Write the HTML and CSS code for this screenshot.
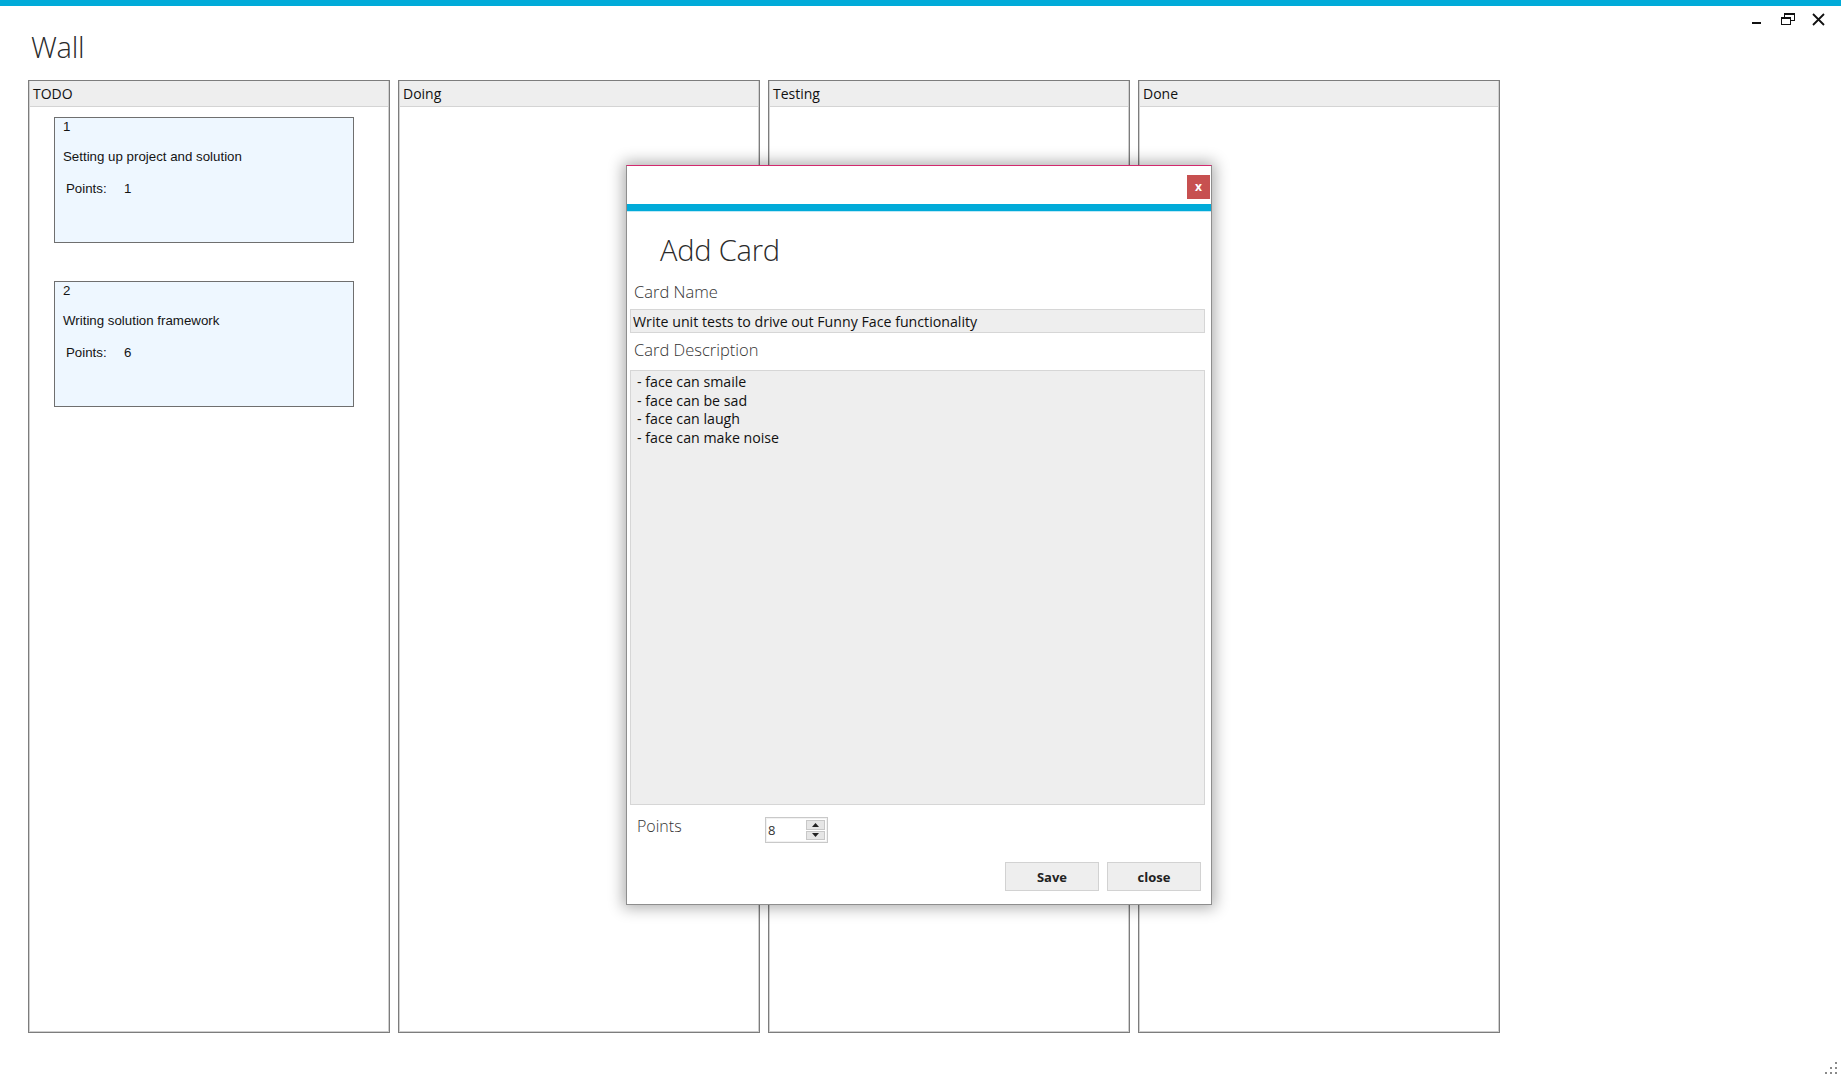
FILE: index.html
```html
<!DOCTYPE html>
<html lang="en">
<head>
<meta charset="utf-8">
<title>Wall</title>
<link rel="stylesheet" href="styles.css">
</head>
<body>
<div class="app">
  <header class="topbar">
    <h1 class="title">Wall</h1>
    <div class="winctl">
      <svg class="winctl-icons" width="80" height="20" viewBox="0 0 80 20" aria-hidden="true">
        <rect x="2" y="12" width="9" height="2" fill="#111"/>
        <rect x="34.5" y="3.5" width="10" height="7" fill="none" stroke="#111" stroke-width="1"/>
        <rect x="34" y="3" width="11" height="2" fill="#111"/>
        <rect x="31.5" y="7.5" width="9" height="7" fill="#fff" stroke="#111" stroke-width="1"/>
        <rect x="31" y="7" width="10" height="2" fill="#111"/>
        <path d="M63 4 L74 15 M74 4 L63 15" stroke="#111" stroke-width="1.8" fill="none"/>
      </svg>
    </div>
  </header>

  <main class="board">
    <section class="column">
      <div class="col-head">TODO</div>
      <div class="col-body">
        <div class="card">
          <div class="card-num">1</div>
          <div class="card-title">Setting up project and solution</div>
          <div class="card-points"><span class="pts-label">Points:</span><span class="pts-val">1</span></div>
        </div>
        <div class="card">
          <div class="card-num">2</div>
          <div class="card-title">Writing solution framework</div>
          <div class="card-points"><span class="pts-label">Points:</span><span class="pts-val">6</span></div>
        </div>
      </div>
    </section>
    <section class="column">
      <div class="col-head">Doing</div>
      <div class="col-body"></div>
    </section>
    <section class="column">
      <div class="col-head">Testing</div>
      <div class="col-body"></div>
    </section>
    <section class="column">
      <div class="col-head">Done</div>
      <div class="col-body"></div>
    </section>
  </main>

  <div class="dialog">
    <div class="dlg-titlebar">
      <button class="dlg-close" type="button">x</button>
    </div>
    <div class="dlg-accent"></div>
    <div class="dlg-body">
      <h2 class="dlg-title">Add Card</h2>
      <label class="dlg-label">Card Name</label>
      <input class="dlg-input" type="text" value="Write unit tests to drive out Funny Face functionality" readonly>
      <label class="dlg-label dlg-label-desc">Card Description</label>
      <textarea class="dlg-textarea" readonly>- face can smaile
- face can be sad
- face can laugh
- face can make noise</textarea>
      <div class="points-row">
        <span class="points-label">Points</span>
        <div class="spinner">
          <span class="spin-value">8</span>
          <div class="spin-btns">
            <span class="spin-btn"><svg width="7" height="4" viewBox="0 0 7 4"><path d="M0 4 L3.5 0 L7 4 Z" fill="#222"/></svg></span>
            <span class="spin-btn"><svg width="7" height="4" viewBox="0 0 7 4"><path d="M0 0 L3.5 4 L7 0 Z" fill="#222"/></svg></span>
          </div>
        </div>
      </div>
      <div class="dlg-actions">
        <button class="btn" type="button">Save</button>
        <button class="btn" type="button">close</button>
      </div>
    </div>
  </div>

  <div class="grip">
    <svg width="14" height="14" viewBox="0 0 14 14" aria-hidden="true">
      <rect x="11" y="1" width="2" height="2" fill="#8a8a8a"/>
      <rect x="6" y="6" width="2" height="2" fill="#8a8a8a"/>
      <rect x="11" y="6" width="2" height="2" fill="#8a8a8a"/>
      <rect x="1" y="11" width="2" height="2" fill="#8a8a8a"/>
      <rect x="6" y="11" width="2" height="2" fill="#8a8a8a"/>
      <rect x="11" y="11" width="2" height="2" fill="#8a8a8a"/>
    </svg>
  </div>
</div>
</body>
</html>
```

FILE: styles.css
```css
html, body {
  margin: 0;
  padding: 0;
  background: #ffffff;
}

body {
  width: 1841px;
  height: 1079px;
  overflow: hidden;
  font-family: "Open Sans", "Noto Sans", sans-serif;
  color: #1a1a1a;
}

.app {
  position: relative;
  width: 1841px;
  height: 1079px;
  box-sizing: border-box;
  border-top: 6px solid #01abd9;
}

/* ---------- header ---------- */
.topbar {
  height: 74px;
  display: flex;
  justify-content: space-between;
  align-items: flex-start;
}

.title {
  margin: 21px 0 0 31px;
  font-family: "Open Sans", sans-serif;
  font-weight: 300;
  font-size: 29px;
  line-height: 40px;
  letter-spacing: -0.3px;
  color: #2a2a2a;
}

.winctl {
  padding: 4px 11px 0 0;
}

.winctl-icons {
  display: block;
}

/* ---------- board ---------- */
.board {
  display: flex;
  gap: 8px;
  padding-left: 28px;
  height: 953px;
}

.column {
  width: 362px;
  height: 953px;
  box-sizing: border-box;
  border: 1px solid #7d7d7d;
  box-shadow: inset 0 0 0 1px #cfcfcf;
  display: flex;
  flex-direction: column;
  background: #fff;
}

.col-head {
  height: 26px;
  box-sizing: border-box;
  margin: 0 1px;
  padding-left: 3px;
  background: #eeeeee;
  border-bottom: 1px solid #d4d4d4;
  font-size: 14px;
  line-height: 26px;
  color: #111;
}

.col-body {
  flex: 1;
  display: flex;
  flex-direction: column;
  gap: 38px;
  padding: 10px 0 0 25px;
}

.card {
  width: 300px;
  height: 126px;
  box-sizing: border-box;
  border: 1px solid #6f6f6f;
  background: #eef7ff;
  padding: 1px 0 0 8px;
  font-family: "Liberation Sans", Arial, sans-serif;
  font-size: 13.3px;
  color: #141414;
}

.card-num {
  line-height: 16px;
}

.card-title {
  margin-top: 14px;
  line-height: 16px;
}

.card-points {
  margin-top: 16px;
  padding-left: 3px;
  line-height: 16px;
  display: flex;
}

.pts-label {
  width: 58px;
}

/* ---------- dialog ---------- */
.dialog {
  position: absolute;
  left: 626px;
  top: 159px;
  width: 586px;
  height: 740px;
  box-sizing: border-box;
  background: #fff;
  border: 1px solid #8e8e8e;
  border-top: 1px solid #d3296e;
  box-shadow: 0 0 14px 3px rgba(0, 0, 0, 0.32);
  display: flex;
  flex-direction: column;
}

.dlg-titlebar {
  height: 38px;
  box-sizing: border-box;
  display: flex;
  justify-content: flex-end;
  align-items: flex-start;
  padding: 9px 1px 0 0;
}

.dlg-close {
  width: 23px;
  height: 24px;
  padding: 0;
  border: none;
  background: #c75050;
  color: #fff;
  font-family: "Open Sans", sans-serif;
  font-weight: 700;
  font-size: 12px;
  line-height: 22px;
}

.dlg-accent {
  height: 7px;
  background: #01abd9;
  border-bottom: 1px solid #bfe9f6;
}

.dlg-body {
  flex: 1;
  display: flex;
  flex-direction: column;
  padding: 0 6px 0 3px;
}

.dlg-title {
  margin: 20px 0 0 30px;
  font-weight: 300;
  font-size: 29px;
  line-height: 36px;
  letter-spacing: -0.2px;
  color: #2a2a2a;
}

.dlg-label {
  display: block;
  margin: 13px 0 0 4px;
  font-weight: 300;
  font-size: 16.5px;
  line-height: 22px;
  color: #333;
}

.dlg-label-desc {
  margin-top: 6px;
}

.dlg-input {
  margin-top: 6px;
  height: 24px;
  box-sizing: border-box;
  border: 1px solid #d6d6d6;
  background: #eeeeee;
  padding: 0 2px;
  font-family: "Open Sans", sans-serif;
  font-size: 14.2px;
  color: #111;
  outline: none;
}

.dlg-textarea {
  margin-top: 9px;
  height: 435px;
  box-sizing: border-box;
  border: 1px solid #d6d6d6;
  background: #eeeeee;
  padding: 2px 6px;
  font-family: "Open Sans", sans-serif;
  font-size: 14.2px;
  line-height: 18.7px;
  color: #111;
  resize: none;
  outline: none;
}

.points-row {
  margin-top: 12px;
  display: flex;
  align-items: flex-start;
}

.points-label {
  width: 128px;
  margin-left: 7px;
  font-weight: 300;
  font-size: 16px;
  line-height: 18px;
  color: #333;
}

.spinner {
  width: 63px;
  height: 26px;
  box-sizing: border-box;
  border: 1px solid #c9c9c9;
  box-shadow: inset 0 0 0 1px #f2f2f2;
  background: #fff;
  display: flex;
}

.spin-value {
  flex: 1;
  padding-left: 2px;
  font-size: 13px;
  line-height: 24px;
  color: #333;
}

.spin-btns {
  width: 19px;
  display: flex;
  flex-direction: column;
  gap: 1px;
  padding: 2px 2px 2px 0;
}

.spin-btn {
  flex: 1;
  background: #e6e6e6;
  border: 1px solid #c8c8c8;
  display: flex;
  align-items: center;
  justify-content: center;
}

.spin-btn svg {
  display: block;
}

.dlg-actions {
  margin-top: 19px;
  display: flex;
  justify-content: flex-end;
  gap: 8px;
  padding-right: 4px;
}

.btn {
  width: 94px;
  height: 29px;
  box-sizing: border-box;
  border: 1px solid #d2d2d2;
  background: #eeeeee;
  font-family: "Open Sans", sans-serif;
  font-weight: 700;
  font-size: 13px;
  color: #222;
  padding: 0;
}

/* ---------- resize grip ---------- */
.grip {
  position: absolute;
  right: 3px;
  bottom: 4px;
  line-height: 0;
}
```
